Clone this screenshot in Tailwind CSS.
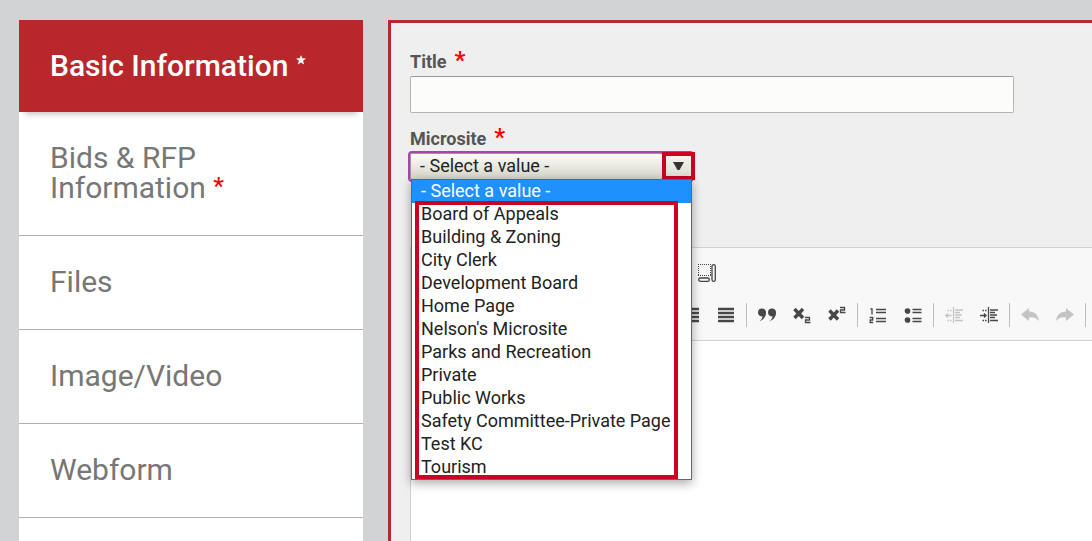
<!DOCTYPE html>
<html lang="en">
<head>
    <meta charset="UTF-8">
    <meta name="viewport" content="width=device-width, initial-scale=1.0">
    <title>Basic Information</title>
    <script src="https://cdn.jsdelivr.net/npm/@tailwindcss/browser@4"></script>
</head>
<body class="bg-[#d1d3d4] font-['Roboto',sans-serif] text-[#555]">
    <div class="flex h-screen gap-[25px] overflow-hidden pl-[19px] pt-5">
        <!-- Section tabs -->
        <nav class="w-[344px] shrink-0 bg-white text-[30px] leading-[30px] text-[#777]">
            <a href="#basic" class="relative block bg-[#b8272c] px-[31px] py-[31px] font-medium text-white shadow-[0_8px_6px_-6px_rgba(0,0,0,0.25)]">Basic Information
                <svg class="inline-block h-[10px] w-[10px] -translate-y-2" viewBox="0 0 10 10" fill="currentColor"><path d="M5 0l1.300 3.300 3.700.2-2.900 2.300 1 3.700L5 7.500 1.900 9.500l1-3.700L0 3.500l3.700-.2z"/></svg></a>
            <a href="#bids" class="block border-b border-[#b1b1a9] px-[31px] pt-[31px] pb-8">Bids &amp; RFP Information <span class="align-[4px] text-[24px] leading-4 font-medium text-[#f00]">*</span></a>
            <a href="#files" class="block border-b border-[#b1b1a9] px-[31px] pt-[31px] pb-8">Files</a>
            <a href="#media" class="block border-b border-[#b1b1a9] px-[31px] pt-[31px] pb-8">Image/Video</a>
            <a href="#webform" class="block border-b border-[#b1b1a9] px-[31px] pt-[31px] pb-8">Webform</a>
        </nav>

        <main class="flex min-w-0 flex-1 flex-col border-t-3 border-l-3 border-[#b8272c] bg-[#efefef] pt-[26px] pl-[19px]">
            <div class="mr-[78px]">
                <label for="title" class="flex h-[27px] gap-2 text-[18px] leading-[26px] font-bold">Title <span class="text-[24px] leading-[22px] text-[#f00]">*</span></label>
                <input id="title" type="text" class="block h-[37px] w-full rounded-[2px] border border-[#b5b5b5] border-t-[#999] bg-[#fcfcfa] px-2 text-[18px]">
            </div>

            <div class="mt-[13px] mb-[67px]">
                <label for="microsite" class="flex h-[27px] gap-2 text-[18px] leading-[26px] font-bold">Microsite <span class="text-[24px] leading-[22px] text-[#f00]">*</span></label>
                <div class="relative z-10 w-[282px]">
                    <select id="microsite" class="block h-[27px] w-full appearance-none rounded-[2px] border border-[#999] bg-linear-to-b from-[#fcfcfa] to-[#d6d6ca] px-[9px] pb-[2px] text-[18px] leading-[22px] text-[#222] outline-2 outline-[#a846a8]">
                        <option>- Select a value -</option>
                    </select>
                    <!-- Arrow marker -->
                    <div class="pointer-events-none absolute -top-px -right-[3px] flex h-7 w-[33px] items-center justify-center border-4 border-[#cc0022] bg-linear-to-b from-[#f5f5f0] to-[#dfdfd5]">
                        <svg class="h-2 w-[11px]" viewBox="0 0 11 8" fill="#333"><path d="M0 0h11L6.500 8h-2z"/></svg>
                    </div>
                    <!-- Open list -->
                    <ul role="listbox" class="absolute top-[26px] left-px w-[281px] border border-[#666] bg-white text-[18px] leading-[21px] text-[#222] shadow-[0_3px_10px_rgba(0,0,0,0.35)]">
                        <li role="option" aria-selected="true" class="bg-[#1e90ff] px-[9px] pb-[2px] text-white">- Select a value -</li>
                        <li role="option" class="px-[9px] pb-[2px]">Board of Appeals</li>
                        <li role="option" class="px-[9px] pb-[2px]">Building &amp; Zoning</li>
                        <li role="option" class="px-[9px] pb-[2px]">City Clerk</li>
                        <li role="option" class="px-[9px] pb-[2px]">Development Board</li>
                        <li role="option" class="px-[9px] pb-[2px]">Home Page</li>
                        <li role="option" class="px-[9px] pb-[2px]">Nelson's Microsite</li>
                        <li role="option" class="px-[9px] pb-[2px]">Parks and Recreation</li>
                        <li role="option" class="px-[9px] pb-[2px]">Private</li>
                        <li role="option" class="px-[9px] pb-[2px]">Public Works</li>
                        <li role="option" class="px-[9px] pb-[2px]">Safety Committee-Private Page</li>
                        <li role="option" class="px-[9px] pb-[2px]">Test KC</li>
                        <li role="option" class="px-[9px] pb-[2px]">Tourism</li>
                        <li role="presentation" class="pointer-events-none absolute top-[21px] right-[13px] bottom-0 left-[3px] border-4 border-[#cc0022]"></li>
                    </ul>
                </div>
            </div>

            <!-- Rich text editor -->
            <div class="flex flex-1 flex-col border-t border-l border-[#d1d1d1] bg-white">
                <div class="overflow-hidden border-b border-[#d1d1d1] bg-[#f8f8f8] py-2 text-[#474747]">
                    <div class="flex h-[34px] pl-[278px]">
                        <button aria-label="Show blocks" class="flex w-[35px] items-center justify-center">
                            <svg class="h-[18px] w-[18px]" viewBox="0 0 18 18" fill="none" stroke="currentColor"><path d="M0 .5h13M0 11.500h13M.5 2v9M12.500 2v9" stroke-dasharray="1 1"/><rect x="14" y=".7" width="3.300" height="16.600" rx="1.600" stroke-width="1.300"/><rect x=".7" y="14" width="10.600" height="3.300" rx="1.600" stroke-width="1.300"/></svg>
                        </button>
                    </div>
                    <div class="mt-2 flex h-[34px] pl-[262px]">
                        <button aria-label="Align right" class="flex w-[35px] shrink-0 items-center justify-center">
                            <svg class="h-4 w-4" viewBox="0 0 16 16" stroke="currentColor" stroke-width="2.600"><path d="M0 2h16M4 6h12M0 10h16M4 14h12"/></svg>
                        </button>
                        <button aria-label="Justify" class="flex w-[35px] shrink-0 items-center justify-center">
                            <svg class="h-4 w-4" viewBox="0 0 16 16" stroke="currentColor" stroke-width="2.600"><path d="M0 2h16M0 6h16M0 10h16M0 14h16"/></svg>
                        </button>
                        <span class="mr-[2px] ml-[3px] h-6 w-px shrink-0 self-center bg-[#bcbcbc]"></span>
                        <button aria-label="Block quote" class="flex w-[35px] shrink-0 items-center justify-center">
                            <svg class="h-[18px] w-[18px]" viewBox="0 0 18 18" fill="currentColor"><path d="M4 2.500a4 4 0 0 1 4 4.500c0 4-3 7-6.500 8.500 2-2.500 3-3.500 3-5C2 10.500 0 9 0 6.500A4 4 0 0 1 4 2.500zM14 2.500a4 4 0 0 1 4 4.500c0 4-3 7-6.500 8.500 2-2.500 3-3.500 3-5C12 10.500 10 9 10 6.500A4 4 0 0 1 14 2.500z"/></svg>
                        </button>
                        <button aria-label="Subscript" class="flex w-[35px] shrink-0 items-center justify-center">
                            <svg class="h-[18px] w-[18px]" viewBox="0 0 18 18" fill="none" stroke="currentColor"><path d="M1.500 3l8.500 9M10 3l-8.500 9" stroke-width="3.400"/><path d="M12 11.500h4.500v2.500H12.500v2.500H17.500" stroke-width="1.300"/></svg>
                        </button>
                        <button aria-label="Superscript" class="flex w-[35px] shrink-0 items-center justify-center">
                            <svg class="h-[18px] w-[18px]" viewBox="0 0 18 18" fill="none" stroke="currentColor"><path d="M1.500 4.500l8.500 9M10 4.500l-8.500 9" stroke-width="3.400"/><path d="M12 1.500h4.500v2.500H12.500v2.500H17.500" stroke-width="1.300"/></svg>
                        </button>
                        <span class="mr-[2px] ml-[3px] h-6 w-px shrink-0 self-center bg-[#bcbcbc]"></span>
                        <button aria-label="Numbered list" class="flex w-[35px] shrink-0 items-center justify-center">
                            <svg class="h-[18px] w-[18px]" viewBox="0 0 18 18" fill="none" stroke="currentColor" stroke-width="1.300"><path d="M1.500 3H3v5.500M.7 11.500h3v2.500H1.200v2.500h3"/><path d="M7 3.500h10M7 6.500h10M7 12.500h10M7 15.500h10"/></svg>
                        </button>
                        <button aria-label="Bulleted list" class="flex w-[35px] shrink-0 items-center justify-center">
                            <svg class="h-[18px] w-[18px]" viewBox="0 0 18 18" stroke="currentColor" stroke-width="1.300"><circle cx="3.500" cy="5" r="2.200" fill="currentColor"/><circle cx="3.500" cy="14" r="2.200" fill="currentColor"/><path d="M8.500 3.500h9M8.500 6.500h9M8.500 12.500h9M8.500 15.500h9"/></svg>
                        </button>
                        <span class="mr-[2px] ml-[3px] h-6 w-px shrink-0 self-center bg-[#bcbcbc]"></span>
                        <button aria-label="Decrease indent" disabled class="flex w-[35px] shrink-0 items-center justify-center text-[#c4c4c4]">
                            <svg class="h-[18px] w-[18px]" viewBox="0 0 18 18" fill="none" stroke="currentColor" stroke-width="1.300"><path d="M8.500 1v16M10 4h8M10 6.500h5M10 9h7M10 11.500h5M10 14.500h8M0 9.500h6.500M3 7.500L1 9.500l2 2"/><path d="M2.500 4.500h5M2.500 14.500h5" stroke-dasharray="1.500 1"/></svg>
                        </button>
                        <button aria-label="Increase indent" class="flex w-[35px] shrink-0 items-center justify-center">
                            <svg class="h-[18px] w-[18px]" viewBox="0 0 18 18" fill="none" stroke="currentColor" stroke-width="1.300"><path d="M8.500 1v16M10 4h8M10 6.500h5M10 9h7M10 11.500h5M10 14.500h8M0 9.500h6.500M4 7.500l2 2-2 2"/><path d="M2.500 4.500h5M2.500 14.500h5" stroke-dasharray="1.500 1"/></svg>
                        </button>
                        <span class="mr-[2px] ml-[3px] h-6 w-px shrink-0 self-center bg-[#bcbcbc]"></span>
                        <button aria-label="Undo" disabled class="flex w-[35px] shrink-0 items-center justify-center text-[#c4c4c4]">
                            <svg class="h-[18px] w-[18px]" viewBox="0 0 18 18" fill="currentColor"><path d="M0 8.500L8 2v3.500c6 0 9.500 4 10 9.500-3-3.500-6-4-10-3.500V15z"/></svg>
                        </button>
                        <button aria-label="Redo" disabled class="flex w-[35px] shrink-0 items-center justify-center text-[#c4c4c4]">
                            <svg class="h-[18px] w-[18px]" viewBox="0 0 18 18" fill="currentColor"><path d="M18 8.500L10 2v3.500C4 5.500.5 9.500 0 15c3-3.500 6-4 10-3.500V15z"/></svg>
                        </button>
                        <span class="mr-[2px] ml-[3px] h-6 w-px shrink-0 self-center bg-[#bcbcbc]"></span>
                    </div>
                </div>
                <textarea aria-label="Description" class="block w-full flex-1 resize-none p-5 outline-none"></textarea>
            </div>
        </main>
    </div>
</body>
</html>
